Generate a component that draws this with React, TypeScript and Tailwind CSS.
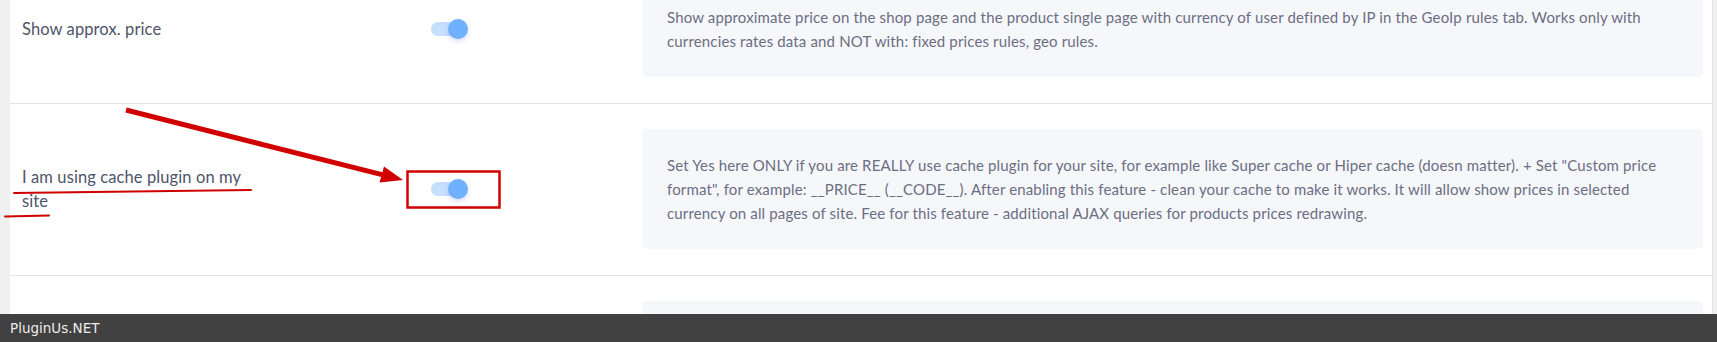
import React from "react";

type Row = {
  label: string;
  text: string;
};

const rows: Row[] = [
  {
    label: "Show approx. price",
    text: "Show approximate price on the shop page and the product single page with currency of user defined by IP in the GeoIp rules tab. Works only with currencies rates data and NOT with: fixed prices rules, geo rules.",
  },
  {
    label: "I am using cache plugin on my site",
    text: 'Set Yes here ONLY if you are REALLY use cache plugin for your site, for example like Super cache or Hiper cache (doesn matter). + Set "Custom price format", for example: __PRICE__ (__CODE__). After enabling this feature - clean your cache to make it works. It will allow show prices in selected currency on all pages of site. Fee for this feature - additional AJAX queries for products prices redrawing.',
  },
];

function Toggle() {
  return (
    <div className="relative w-[58px] h-[38px] p-[12px]">
      <div className="w-full h-full rounded-full bg-[#c6dffe]" />
      <div className="absolute top-[9px] left-[29px] w-[20px] h-[20px] rounded-full bg-[#70b1ff] shadow-[0_2px_5px_rgba(90,110,220,0.28)]" />
    </div>
  );
}

function OptionRow({ row }: { row: Row }) {
  return (
    <div className="flex items-center border-b border-[#e3e3e8] pt-[25px] pb-[26px] pl-3 pr-[9px]">
      <div className="w-[232px] text-[16.5px] leading-[24px] tracking-[0.1px] text-[#4f5469]">{row.label}</div>
      <div className="flex-1 flex justify-center">
        <Toggle />
      </div>
      <div className="w-[1061px] rounded-[5px] bg-[#f6f7fb] pl-[25px] pr-[20px] py-6 text-[15px] leading-[24px] tracking-[0.15px] text-[#6b6e82]">
        {row.text}
      </div>
    </div>
  );
}

export default function App() {
  return (
    <div className="relative w-[1717px] h-[342px] overflow-hidden bg-[#f0f0f1] font-['Lato','Open_Sans',sans-serif]">
      <div className="h-[314px] overflow-hidden">
        <div className="ml-[10px] w-[1703px] h-full flex flex-col bg-white border-r border-[#e4e4e6]">
          <div className="-mt-[44px]">
            {rows.map((r) => (
              <OptionRow key={r.label} row={r} />
            ))}
            <div className="flex pt-[25px] pl-3 pr-[9px]">
              <div className="flex-1" />
              <div className="w-[1061px] h-[96px] rounded-[5px] bg-[#f6f7fb]" />
            </div>
          </div>
        </div>
      </div>

      <div className="h-[28px] bg-[#414141] pl-[10px] text-[13.5px] leading-[28px] text-[#ececec] font-['DejaVu_Sans',sans-serif]">
        PluginUs.NET
      </div>

      {/* red annotations drawn over the screenshot */}
      <svg className="absolute inset-0 pointer-events-none" width="1717" height="342" viewBox="0 0 1717 342">
        <line x1="126" y1="110" x2="382" y2="174.6" stroke="#d10000" strokeWidth="5" />
        <polygon points="403,180 379.5,182.6 384,166.6" fill="#d10000" />
        <rect x="407.5" y="171.5" width="92" height="36" fill="none" stroke="#d10000" strokeWidth="2.5" />
        <line x1="14" y1="193" x2="251" y2="190" stroke="#d10000" strokeWidth="2" strokeLinecap="round" />
        <line x1="5" y1="216.5" x2="49" y2="215.5" stroke="#d10000" strokeWidth="2" strokeLinecap="round" />
      </svg>
    </div>
  );
}
